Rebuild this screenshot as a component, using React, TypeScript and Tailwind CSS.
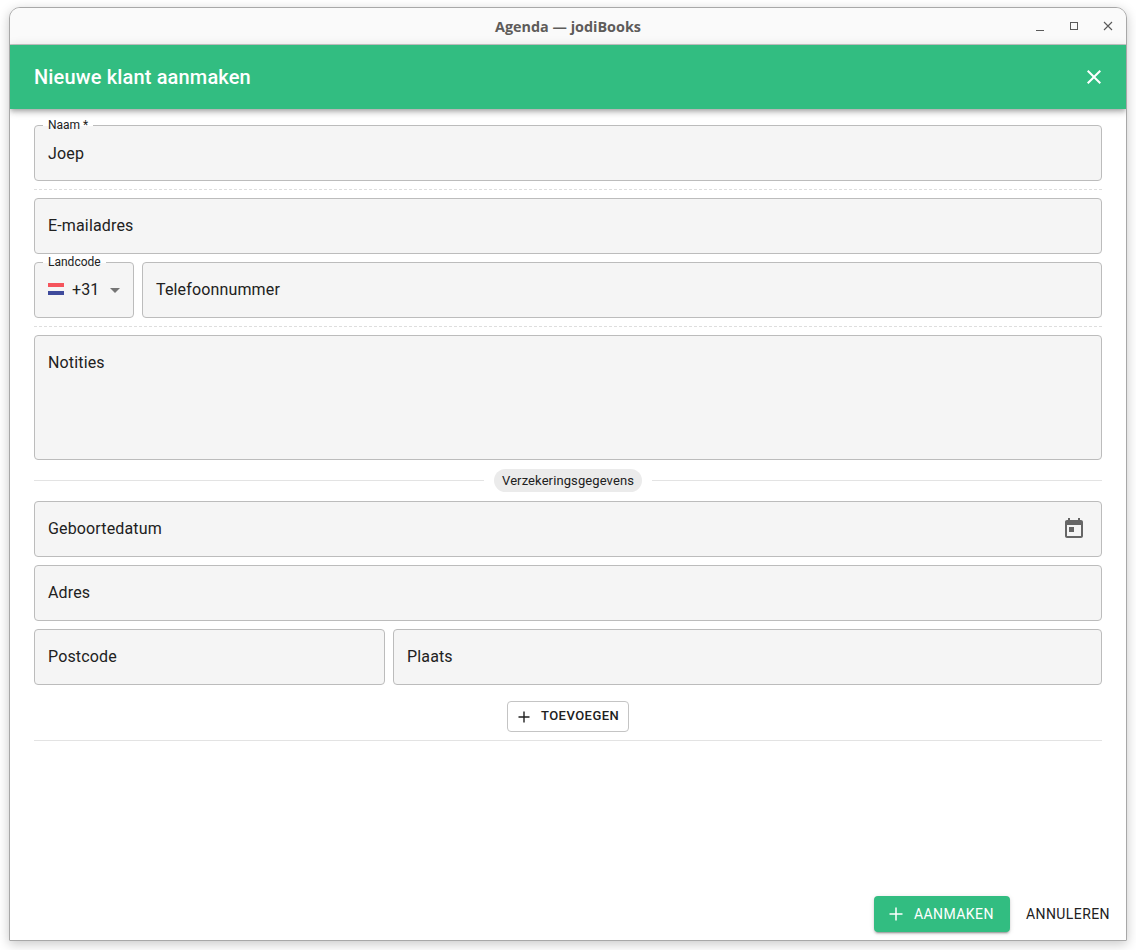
import React from "react";

const roboto = "font-['Roboto',sans-serif]";

function Notch({ children }: { children: React.ReactNode }) {
  return (
    <span className="absolute left-[8px] top-[-7px] h-[14px] px-[5px] text-[12px] leading-[13px] tracking-normal text-[#212121] bg-linear-to-b from-white from-50% to-[#f5f5f5] to-50%">
      {children}
    </span>
  );
}

function Field({ children, className = "", tall = false }: { children?: React.ReactNode; className?: string; tall?: boolean }) {
  return (
    <div className={`relative flex ${tall ? "h-[125px] items-start pt-[17px]" : "h-[56px] items-center"} rounded-[4px] border border-[#bcbcbc] bg-[#f5f5f5] pl-[13px] text-[16px] leading-[20px] tracking-[0.15px] text-[#212121] ${className}`}>
      {children}
    </div>
  );
}

function Dashed() {
  return <div className="h-0 border-t border-dashed border-[#dedede]" />;
}

export default function App() {
  return (
    <div className={`h-[950px] w-[1136px] overflow-hidden bg-white pl-[9px] pt-[7px] ${roboto}`}>
      <div className="flex h-[934px] w-[1118px] flex-col overflow-hidden rounded-t-[11px] rounded-b-[1px] border border-[#a8a8a8] bg-white shadow-[0_3px_12px_rgba(0,0,0,0.22)]">
        {/* Title bar */}
        <div className="relative flex h-[37px] shrink-0 items-center justify-center border-b border-[#c8c8c8] bg-[#fafafa]">
          <span className="mt-[1px] font-['Open_Sans',sans-serif] text-[14.4px] font-bold leading-[20px] text-[#5e5c5a]">Agenda — jodiBooks</span>
          <div className="absolute right-[13px] top-[13px] flex items-center gap-[24px] text-[#5a5a5a]">
            <svg width="10" height="10" viewBox="0 0 10 10"><path d="M1 9.5h8" stroke="currentColor" strokeWidth="1" /></svg>
            <svg width="10" height="10" viewBox="0 0 10 10" fill="none"><rect x="1.5" y="1.5" width="7" height="7" stroke="currentColor" strokeWidth="1" /></svg>
            <svg width="10" height="10" viewBox="0 0 10 10" fill="none"><path d="M1 1l8 8M9 1l-8 8" stroke="currentColor" strokeWidth="1.1" /></svg>
          </div>
        </div>

        {/* Green header */}
        <div className="relative z-10 flex h-[64px] shrink-0 items-center justify-between bg-[#32bd81] pl-[24px] pr-[24px] shadow-[0_2px_4px_-1px_rgba(0,0,0,0.2),0_4px_5px_0_rgba(0,0,0,0.14),0_1px_10px_0_rgba(0,0,0,0.12)]">
          <span className="text-[20px] font-medium leading-[28px] tracking-[0.15px] text-white">Nieuwe klant aanmaken</span>
          <svg width="24" height="24" viewBox="0 0 24 24" fill="white" className="mr-[-4px]">
            <path d="M19 6.41 17.59 5 12 10.59 6.41 5 5 6.41 10.59 12 5 17.59 6.41 19 12 13.41 17.59 19 19 17.59 13.41 12z" />
          </svg>
        </div>

        {/* Form */}
        <div className="flex flex-1 flex-col px-[24px] pt-[16px]">
          <Field>
            <Notch>Naam *</Notch>
            <span className="mt-[1px]">Joep</span>
          </Field>
          <div className="py-[8px]"><Dashed /></div>
          <Field>E-mailadres</Field>
          <div className="mt-[8px] flex gap-[8px]">
            <Field className="w-[100px] shrink-0">
              <Notch>Landcode</Notch>
              <span className="mb-[3px] flex h-[12px] w-[16px] flex-col overflow-hidden">
                <span className="flex-1 bg-[#f5545c]" />
                <span className="flex-1 bg-[#f5f5f5]" />
                <span className="flex-1 bg-[#3f4b9c]" />
              </span>
              <span className="ml-[8px]">+31</span>
              <svg width="24" height="24" viewBox="0 0 24 24" fill="#757575" className="ml-[3px]"><path d="M7 10l5 5 5-5z" /></svg>
            </Field>
            <Field className="flex-1">Telefoonnummer</Field>
          </div>
          <div className="py-[8px]"><Dashed /></div>
          <Field tall>Notities</Field>

          {/* Divider */}
          <div className="my-[9px] flex h-[23px] items-center">
            <div className="h-px flex-1 bg-[#e3e3e3]" />
            <span className="mx-[10px] flex h-[23px] items-center rounded-full bg-[#ebebeb] px-[8px] text-[13px] leading-[18px] tracking-[0.1px] text-[#212121]">Verzekeringsgegevens</span>
            <div className="h-px flex-1 bg-[#e3e3e3]" />
          </div>

          <Field className="justify-between pr-[15px]">
            Geboortedatum
            <svg width="24" height="24" viewBox="0 0 24 24" fill="#666">
              <path d="M19 3h-1V1h-2v2H8V1H6v2H5c-1.11 0-1.99.9-1.99 2L3 19c0 1.1.89 2 2 2h14c1.1 0 2-.9 2-2V5c0-1.1-.9-2-2-2zm0 16H5V8h14v11zM7 10h5v5H7z" />
            </svg>
          </Field>
          <Field className="mt-[8px]">Adres</Field>
          <div className="mt-[8px] flex gap-[8px]">
            <Field className="w-[351px] shrink-0">Postcode</Field>
            <Field className="flex-1">Plaats</Field>
          </div>

          {/* Add button */}
          <div className="mt-[16px] flex justify-center">
            <button className="flex h-[31px] w-[122px] items-center rounded-[4px] border border-[#c4c4c4] bg-white pb-[1px] pl-[8px] text-[13px] font-medium leading-[16px] tracking-[0.46px] text-[#212121]">
              <svg width="16" height="16" viewBox="0 0 16 16" fill="none" className="mt-[1px]"><path d="M8 2.5v11M2.5 8h11" stroke="#212121" strokeWidth="1.4" /></svg>
              <span className="ml-[9px]">TOEVOEGEN</span>
            </button>
          </div>
          <div className="mt-[8px] h-px bg-[#e3e3e3]" />

          {/* Footer */}
          <div className="mt-auto mb-[8px] mr-[-24px] flex items-center justify-end">
            <button className="flex h-[36px] w-[136px] items-center rounded-[4px] bg-[#32bd81] pl-[14px] text-[14px] font-[450] leading-[20px] tracking-[0.42px] text-white shadow-[0_3px_1px_-2px_rgba(0,0,0,0.2),0_2px_2px_0_rgba(0,0,0,0.14),0_1px_5px_0_rgba(0,0,0,0.12)]">
              <svg width="16" height="16" viewBox="0 0 16 16" fill="none"><path d="M8 1.5v13M1.5 8h13" stroke="white" strokeWidth="1.5" /></svg>
              <span className="ml-[10px]">AANMAKEN</span>
            </button>
            <button className="flex h-[36px] w-[116px] items-center justify-center text-[14px] font-[450] leading-[20px] tracking-[0.42px] text-[#212121]">ANNULEREN</button>
          </div>
        </div>
      </div>
    </div>
  );
}
